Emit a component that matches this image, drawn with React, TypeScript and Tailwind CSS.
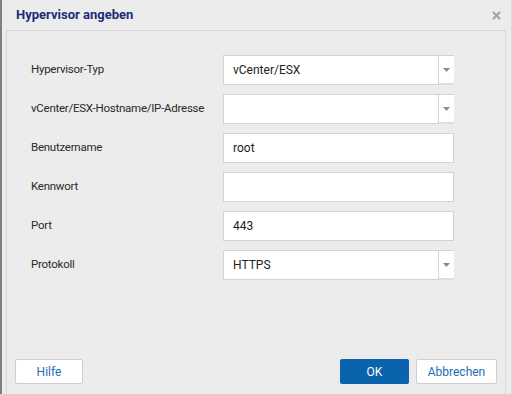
import React from 'react';

type Field = {
  label: string;
  value: string;
  select?: boolean;
};

const fields: Field[] = [
  { label: 'Hypervisor-Typ', value: 'vCenter/ESX', select: true },
  { label: 'vCenter/ESX-Hostname/IP-Adresse', value: '', select: true },
  { label: 'Benutzername', value: 'root' },
  { label: 'Kennwort', value: '' },
  { label: 'Port', value: '443' },
  { label: 'Protokoll', value: 'HTTPS', select: true },
];

function FieldBox({ field }: { field: Field }) {
  if (!field.select) {
    return (
      <div className="w-[231px] h-[30px] bg-white border border-[#d3d3d3] flex items-center pl-[9px] text-[12px] text-[#222]">
        {field.value}
      </div>
    );
  }
  return (
    <div className="w-[231px] h-[30px] flex">
      <div className="flex-1 bg-white border border-[#d3d3d3] flex items-center pl-[9px] text-[12px] text-[#222]">
        {field.value}
      </div>
      <div className="w-[15px] bg-white border-t border-[#d3d3d3] border-b-2 border-b-[#cfe1f2] flex items-center justify-center">
        <svg width="7" height="4" viewBox="0 0 7 4">
          <path d="M0 0 L7 0 L3.5 4 Z" fill="#8a8a8a" />
        </svg>
      </div>
    </div>
  );
}

export default function App() {
  return (
    <div
      className="w-[512px] h-[394px] bg-[#ececec] border-l-2 border-[#7f7f7f] border-r border-r-[#dcdcdc] flex flex-col overflow-hidden"
      style={{ fontFamily: 'Roboto, "Liberation Sans", sans-serif' }}
    >
      <div className="h-[30px] shrink-0 flex items-center justify-between pl-[14px] pr-[10px]">
        <h1 className="text-[13px] font-bold text-[#1c2b7a]">Hypervisor angeben</h1>
        <svg width="9" height="9" viewBox="0 0 9 9">
          <path d="M1 1 L8 8 M8 1 L1 8" stroke="#a0a0a0" strokeWidth="2" />
        </svg>
      </div>

      <div className="flex-1 ml-[4px] mr-[5px] border-x border-t border-[#d6d6d6] flex flex-col">
        <div className="pt-[24px] pl-[24px] flex flex-col gap-[9px]">
          {fields.map((f) => (
            <div key={f.label} className="flex items-center">
              <span className="w-[192px] text-[11.5px] tracking-[-0.25px] text-[#2a2a2a]">{f.label}</span>
              <FieldBox field={f} />
            </div>
          ))}
        </div>

        <div className="mt-auto mb-[10px] px-[8px] flex items-center">
          <button className="w-[68px] h-[25px] bg-white border border-[#cfcfcf] rounded-[2px] text-[12px] text-[#1d6db4]">
            Hilfe
          </button>
          <div className="flex-1" />
          <button className="w-[69px] h-[25px] bg-[#0a63ac] rounded-[2px] text-[12px] text-white">
            OK
          </button>
          <button className="ml-[7px] w-[81px] h-[25px] bg-white border border-[#cfcfcf] rounded-[2px] text-[12px] text-[#1d6db4]">
            Abbrechen
          </button>
        </div>
      </div>
    </div>
  );
}
